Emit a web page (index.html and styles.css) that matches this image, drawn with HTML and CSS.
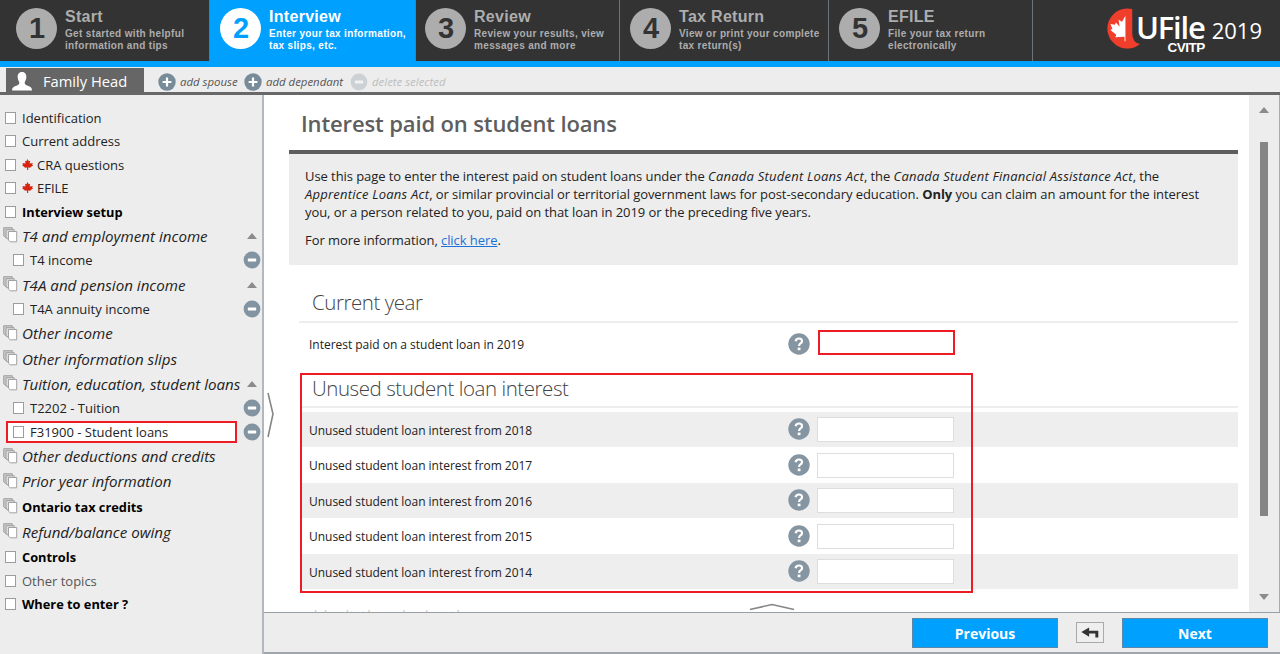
FILE: index.html
```html
<!DOCTYPE html>
<html lang="en">
<head>
<meta charset="utf-8">
<title>UFile 2019 - Interest paid on student loans</title>
<link rel="stylesheet" href="styles.css">
</head>
<body>
<svg class="defs" aria-hidden="true">
  <symbol id="plus" viewBox="0 0 18 18"><circle cx="9" cy="9" r="8.7" fill="#788b99"/><path d="M9 4.6v8.8M4.6 9h8.8" stroke="#fff" stroke-width="2.2"/></symbol>
  <symbol id="minus" viewBox="0 0 18 18"><circle cx="9" cy="9" r="8.4" fill="#8294a2"/><rect x="4.8" y="7.4" width="8.4" height="3" rx=".6" fill="#fff"/></symbol>
  <symbol id="help" viewBox="0 0 22 22"><circle cx="11" cy="11" r="10.7" fill="#8595a1"/><path d="M7.6 8.2Q8.1 5.4 11 5.5Q14.2 5.7 14 8.3Q13.9 9.6 12.2 10.6Q11.2 11.3 11.1 13" fill="none" stroke="#fff" stroke-width="2.2"/><rect x="9.7" y="14.6" width="2.8" height="2.6" fill="#fff"/></symbol>
  <symbol id="stack" viewBox="0 0 15 16"><path d="M.7.7h8.6v11H4L.7 8.8z" fill="#c8c8c8" stroke="#a2a2a2"/><path d="M3 2.7h8.2v10H5.5L3 10.2z" fill="#ddd" stroke="#a2a2a2"/><path d="M5.5 4.5h8.2v10.3H7.2l-1.7-1.6z" fill="#fff" stroke="#a2a2a2"/></symbol>
  <symbol id="maple" viewBox="0 0 20 20"><path d="M10 0l2.3 4.2 2.5-1.200-.7 5 5.400-.7-1 3 1.800 1.200-5 3.500.3 1-4.400-.4V20H9.200v-4.400l-4.400.4.300-1-5-3.500 1.800-1.200-1-3 5.400.7-.7-5 2.500 1.200z" fill="#d9230f"/></symbol>
</svg>

<header class="top">
  <nav class="steps">
    <div class="step s1"><span class="num">1</span><div><h2>Start</h2><p>Get started with helpful<br>information and tips</p></div></div>
    <div class="step s2 active"><span class="num">2</span><div><h2>Interview</h2><p>Enter your tax information,<br>tax slips, etc.</p></div></div>
    <div class="step s3"><span class="num">3</span><div><h2>Review</h2><p>Review your results, view<br>messages and more</p></div></div>
    <div class="step s4"><span class="num">4</span><div><h2>Tax Return</h2><p>View or print your complete<br>tax return(s)</p></div></div>
    <div class="step s5"><span class="num">5</span><div><h2>EFILE</h2><p>File your tax return<br>electronically</p></div></div>
  </nav>
  <div class="brand">
    <svg class="mark" viewBox="0 0 37 43"><path d="M28 1A20.600 20.600 0 1 0 36 37Q28 35 28 26z" fill="#f03e2d"/><path d="M21 8v26h-.9v-4.500l-9.500.500 1-2.500-6-5 2-1.200-2-5 4.500.800 1.200-2.200 3.700 4.200-1-7 3.500 2z" fill="#fff"/></svg>
    <div class="wordmark"><span class="ufile">UFile</span><span class="cvitp">CVITP</span></div>
    <span class="year">2019</span>
  </div>
</header>

<div class="members">
  <div class="person"><svg class="bust" viewBox="0 0 20 19"><path d="M10 0c3.300 0 4.600 2.500 4.300 5.500-.2 2.600-1.300 3.600-1.600 4.800-.2 1.600.3 2.500 3 3.400 3 .9 4.300 2 4.300 4.800H0c0-2.800 1.300-3.900 4.300-4.800 2.700-.9 3.200-1.800 3-3.400-.3-1.200-1.400-2.200-1.600-4.800C5.400 2.500 6.700 0 10 0z" fill="#fff"/></svg><span>Family Head</span></div>
  <div class="act spouse"><svg><use href="#plus"/></svg><span>add spouse</span></div>
  <div class="act dependant"><svg><use href="#plus"/></svg><span>add dependant</span></div>
  <div class="act off"><svg><use href="#minus"/></svg><span>delete selected</span></div>
</div>

<div class="body">
  <aside class="side">
    <div class="row"><i class="box"></i><span>Identification</span></div>
    <div class="row"><i class="box"></i><span>Current address</span></div>
    <div class="row"><i class="box"></i><svg class="leaf"><use href="#maple"/></svg><span>CRA questions</span></div>
    <div class="row"><i class="box"></i><svg class="leaf"><use href="#maple"/></svg><span>EFILE</span></div>
    <div class="row strong"><i class="box"></i><span>Interview setup</span></div>
    <div class="row group"><svg class="stack"><use href="#stack"/></svg><span>T4 and employment income</span><i class="tri"></i></div>
    <div class="row sub"><i class="box"></i><span>T4 income</span><svg class="del"><use href="#minus"/></svg></div>
    <div class="row group"><svg class="stack"><use href="#stack"/></svg><span>T4A and pension income</span><i class="tri"></i></div>
    <div class="row sub"><i class="box"></i><span>T4A annuity income</span><svg class="del"><use href="#minus"/></svg></div>
    <div class="row group"><svg class="stack"><use href="#stack"/></svg><span>Other income</span></div>
    <div class="row group"><svg class="stack"><use href="#stack"/></svg><span>Other information slips</span></div>
    <div class="row group"><svg class="stack"><use href="#stack"/></svg><span>Tuition, education, student loans</span><i class="tri"></i></div>
    <div class="row sub"><i class="box"></i><span>T2202 - Tuition</span><svg class="del"><use href="#minus"/></svg></div>
    <div class="row sub current"><i class="box"></i><span>F31900 - Student loans</span><svg class="del"><use href="#minus"/></svg></div>
    <div class="row group"><svg class="stack"><use href="#stack"/></svg><span>Other deductions and credits</span></div>
    <div class="row group"><svg class="stack"><use href="#stack"/></svg><span>Prior year information</span></div>
    <div class="row group strong"><svg class="stack"><use href="#stack"/></svg><span>Ontario tax credits</span></div>
    <div class="row group last"><svg class="stack"><use href="#stack"/></svg><span>Refund/balance owing</span></div>
    <div class="row strong"><i class="box"></i><span>Controls</span></div>
    <div class="row dim"><i class="box"></i><span>Other topics</span></div>
    <div class="row strong"><i class="box"></i><span>Where to enter ?</span></div>
  </aside>

  <div class="work">
    <div class="view">
      <main class="page">
        <h1>Interest paid on student loans</h1>
        <section class="info">
          <p>Use this page to enter the interest paid on student loans under the <em>Canada Student Loans Act</em>, the <em>Canada Student Financial Assistance Act</em>, the<br>
          <em>Apprentice Loans Act</em>, or similar provincial or territorial government laws for post-secondary education. <b>Only</b> you can claim an amount for the interest<br>
          you, or a person related to you, paid on that loan in 2019 or the preceding five years.</p>
          <p>For more information, <a href="#">click here</a>.</p>
        </section>
        <section class="year-now">
          <h3>Current year</h3>
          <div class="field"><label>Interest paid on a student loan in 2019</label><svg class="help"><use href="#help"/></svg><input class="marked"></div>
        </section>
        <section class="unused">
          <h3>Unused student loan interest</h3>
          <div class="field alt"><label>Unused student loan interest from 2018</label><svg class="help"><use href="#help"/></svg><input></div>
          <div class="field"><label>Unused student loan interest from 2017</label><svg class="help"><use href="#help"/></svg><input></div>
          <div class="field alt"><label>Unused student loan interest from 2016</label><svg class="help"><use href="#help"/></svg><input></div>
          <div class="field"><label>Unused student loan interest from 2015</label><svg class="help"><use href="#help"/></svg><input></div>
          <div class="field alt"><label>Unused student loan interest from 2014</label><svg class="help"><use href="#help"/></svg><input></div>
          <div class="frame"></div>
        </section>
        <h3 class="next-title">Limit the deduction</h3>
      </main>
      <div class="scroll"><i class="tri up"></i><i class="thumb"></i><i class="tri down"></i></div>
      <svg class="side-handle" viewBox="0 0 8 46"><path d="M1 1l5 21-5 23" fill="none" stroke="#868686" stroke-width="1.600"/></svg>
      <svg class="foot-handle" viewBox="0 0 46 8"><path d="M1 6.500l22-5 22 5" fill="none" stroke="#868686" stroke-width="1.600"/></svg>
    </div>
    <footer class="foot">
      <button class="go">Previous</button>
      <button class="back"><svg viewBox="0 0 20 12"><path d="M0 5.500L8.500.500V4H18.500v7.500h-3.200V7H8.500v3.500z" fill="#333"/></svg></button>
      <button class="go">Next</button>
    </footer>
  </div>
</div>
</body>
</html>
```

FILE: styles.css
```css
* { box-sizing: border-box; }
body {
  margin: 0;
  width: 1280px;
  height: 654px;
  overflow: hidden;
  display: flex;
  flex-direction: column;
  background: #ededed;
  color: #222;
  font: 13px "Open Sans", "Noto Sans", sans-serif;
}
h1, h2, h3, p { margin: 0; }
svg { display: block; flex: none; }
i { font-style: normal; }
.defs { position: absolute; width: 0; height: 0; }

/* Step bar */
.top {
  flex: none;
  height: 67px;
  display: flex;
  justify-content: space-between;
  background: #333;
  border-bottom: 6px solid #00a0ff;
  font-family: "Liberation Sans", Arial, sans-serif;
  font-weight: bold;
}
.steps { display: flex; }
.step {
  display: flex;
  gap: 8px;
  padding: 8px 0 0 16px;
  border-right: 1px solid #6c7379;
  color: #adadad;
  white-space: nowrap;
}
.s1 { width: 210px; }
.s2 { width: 206px; padding-left: 10px; }
.s3 { width: 204px; padding-left: 9px; }
.s4 { width: 209px; padding-left: 10px; }
.s5 { width: 204px; padding-left: 10px; }
.num {
  width: 41px;
  height: 41px;
  border-radius: 50%;
  background: #adadad;
  color: #333;
  font-size: 29px;
  line-height: 40px;
  padding-left: 1px;
  text-align: center;
}
.step h2 { font-size: 16px; line-height: 18px; letter-spacing: .3px; }
.step p { margin-top: 2px; font-size: 10px; line-height: 12px; letter-spacing: .34px; }
.active { background: #00a0ff; color: #fff; }
.active .num { background: #fff; color: #00a0ff; }

.brand {
  display: flex;
  align-items: flex-start;
  padding: 8px 18px 0 0;
  color: #fff;
  font-family: "Open Sans", sans-serif;
}
.mark { width: 36px; height: 42px; }
.wordmark { display: flex; flex-direction: column; align-items: flex-end; margin: 5px 0 0 -5px; }
.ufile { font: 600 31px/28px "Open Sans", sans-serif; letter-spacing: -1.200px; }
.cvitp { font: bold 13.500px/14px "Liberation Sans", sans-serif; letter-spacing: -.5px; }
.year { font: 400 22px/44px "Open Sans", sans-serif; margin-left: 7px; }

/* Family members */
.members {
  flex: none;
  height: 28px;
  display: flex;
  align-items: stretch;
  padding: 1px 0 0 6px;
  border-bottom: 3px solid #686868;
  background: #ededed;
}
.person {
  width: 138px;
  display: flex;
  align-items: center;
  gap: 11px;
  padding: 2px 0 0 6px;
  background: #666;
  color: #fff;
  font-size: 14.700px;
}
.bust { width: 20px; height: 19px; margin-top: 1px; }
.act { display: flex; align-items: center; gap: 4px; padding-top: 3px; color: #555; font-size: 11.400px; font-style: italic; white-space: nowrap; }
.act svg { width: 18px; height: 18px; }
.spouse { width: 86px; margin-left: 14px; }
.dependant { width: 106px; }
.off { color: #bdbdbd; }
.off svg { opacity: .3; }

/* Interview tree */
.body { flex: 1; display: flex; min-height: 0; }
.side { width: 264px; flex: none; padding-top: 11.300px; border-right: 2px solid #b2b8be; }
.row { height: 23.400px; display: flex; align-items: center; padding-left: 5px; white-space: nowrap; }
.row.group { height: 25.200px; padding-left: 3px; font-size: 15.150px; font-style: italic; }
.row.group.last { margin-bottom: 1.400px; }
.row.sub { height: 23.600px; padding-left: 13px; }
.box { width: 11px; height: 12px; flex: none; margin-right: 6px; border: 1px solid #9c9c9c; background: #fff; }
.leaf { width: 11px; height: 11px; margin: 0 4px 1px 0; }
.stack { width: 15px; height: 16px; margin: 0 4px 1px 0; }
.row.strong { color: #000; font-weight: bold; font-style: normal; font-size: 12.800px; }
.row.dim { color: #555; }
.tri { border: 5px solid transparent; border-top: 0; border-bottom: 6px solid #8b8b8b; margin-left: auto; margin-right: 5px; }
.del { width: 18px; height: 18px; margin-left: auto; margin-right: 1px; }
.row.current { position: relative; }
.row.current::before {
  content: "";
  box-sizing: border-box;
  position: absolute;
  z-index: -1;
  left: 6px;
  top: 1.500px;
  width: 231px;
  height: 22px;
  border: 2px solid #ed1c24;
  background: #fff;
}

/* Work area */
.work { flex: 1; display: flex; flex-direction: column; min-width: 0; }
.view { flex: 1; display: flex; position: relative; min-height: 0; overflow: hidden; background: #fff; }
.page { width: 985px; flex: none; padding: 0 11px 0 25px; }
h1 { height: 59px; padding: 9px 0 0 12px; border-bottom: 4px solid #5e5e5e; color: #5e5e5e; font-size: 22px; line-height: 38px; font-weight: 600; letter-spacing: -.13px; white-space: nowrap; }
.info { height: 111px; padding: 13px 0 0 16px; background: #ededed; white-space: nowrap; letter-spacing: -.07px; }
.info em { letter-spacing: .23px; }
.info p { line-height: 18px; margin-bottom: 10px; }
.info a { color: #1c71d8; }
h3 { color: #444; font-size: 20.500px; font-weight: 300; letter-spacing: -.45px; }
.year-now { margin-left: 10px; }
.year-now h3 { height: 58px; padding: 21px 0 0 13px; line-height: 32px; border-bottom: 2px solid #ededed; }
.field { height: 35.500px; display: flex; align-items: center; padding-left: 10px; }
.field label { width: 479px; padding-top: 2px; font-size: 12px; letter-spacing: -.02px; }
.field.alt { background: #eee; }
.help { width: 22px; height: 22px; margin-right: 7px; }
.field input { width: 137px; height: 25px; margin-top: 1px; border: 1px solid #ddd; background: #fff; outline: 0; }
.field input.marked { width: 137px; height: 25px; margin: 0 0 2px 1px; border: 2px solid #ed1c24; }
.year-now .field { height: 42px; padding-bottom: 1px; }
.unused { position: relative; margin-left: 12px; padding-top: 8px; }
.unused h3 { height: 35px; line-height: 30px; padding-left: 11px; border-bottom: 2px solid #ededed; margin-bottom: 3.500px; }
.unused .field { padding-left: 8px; }
.frame { position: absolute; left: -1px; top: 8px; width: 673px; height: 220px; border: 2px solid #ed1c24; }
.next-title { margin: 13px 0 0 24px; line-height: 30px; color: #c4c4c4; }
.scroll { flex: 1; display: flex; flex-direction: column; align-items: center; background: #ededed; border-right: 1px solid #aaa; }
.scroll .tri { margin: 12px 0 0; }
.thumb { width: 8px; height: 374px; margin-top: 29px; background: #858585; }
.scroll .down { margin: auto 0 12px; transform: rotate(180deg); }
.side-handle { position: absolute; left: 3px; top: 297px; width: 8px; height: 46px; }
.foot-handle { position: absolute; left: 485px; top: 508px; width: 46px; height: 8px; }

.foot { height: 42px; flex: none; display: flex; align-items: flex-start; justify-content: flex-end; gap: 18px; padding: 5px 12px 0 0; border-top: 1px solid #989fa5; border-bottom: 2px solid #a0a6ab; }
button { padding: 0; font: bold 14px "Open Sans", sans-serif; }
.go { width: 146px; height: 30px; color: #fff; background: #00a0ff; border: 1px solid #5b88a8; }
.back { width: 28px; height: 21px; margin-top: 4px; border: 1px solid #aaa; background: #efefef; display: grid; place-items: center; }
.back svg { width: 19px; height: 11px; }
```
